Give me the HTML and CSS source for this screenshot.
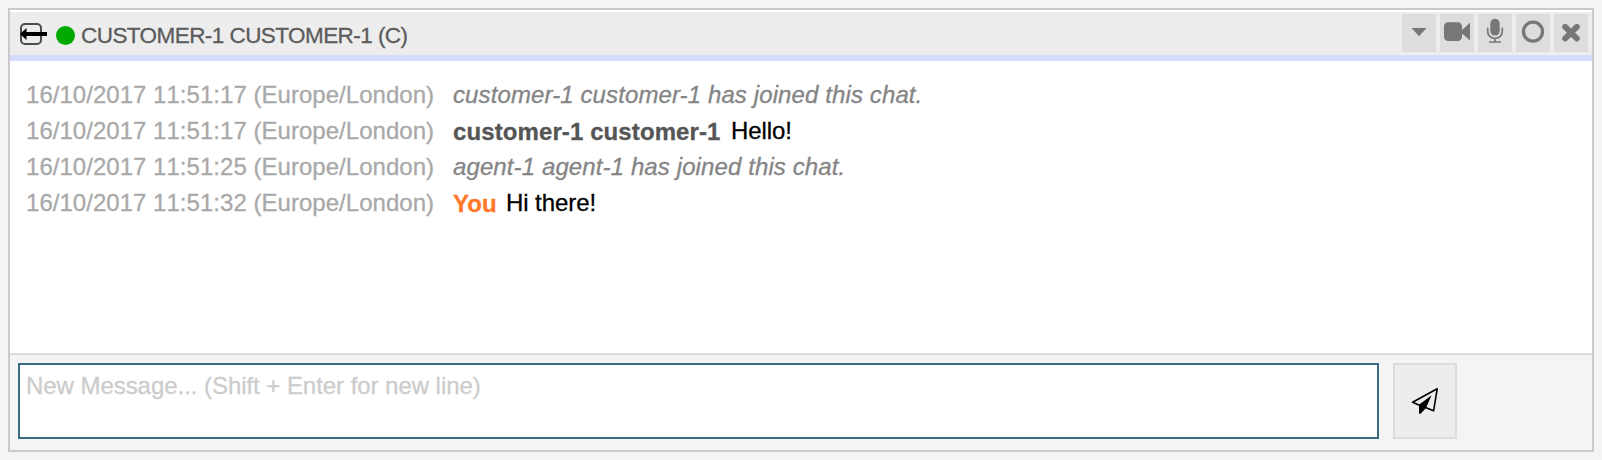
FILE: index.html
```html
<!DOCTYPE html>
<html lang="en">
<head>
<meta charset="utf-8">
<title>Chat</title>
<link rel="stylesheet" href="styles.css">
</head>
<body>
<section class="chat">
  <header class="chat-header">
    <svg class="exit-icon" width="30" height="24" viewBox="0 0 30 24"><rect x="2" y="2" width="20" height="20" rx="4" fill="none" stroke="#4c4c4c" stroke-width="2"/><path d="M1 12 7.5 6V10H28v4H7.5v4Z"/></svg>
    <span class="status"></span>
    <h1 class="title">CUSTOMER-1 CUSTOMER-1 (C)</h1>
    <div class="tools">
      <button class="tool" aria-label="Options"><svg viewBox="0 0 34 38"><path d="M9.6 14h15L17 22.3Z"/></svg></button>
      <button class="tool" aria-label="Video"><svg viewBox="0 0 34 38"><rect x="4" y="8.3" width="18" height="18.7" rx="4.2"/><path d="m22 16 8-7.2v17.8L22 19.4Z"/></svg></button>
      <button class="tool" aria-label="Audio"><svg viewBox="0 0 34 38"><rect x="12.3" y="4.8" width="9.4" height="16.8" rx="4.7"/><path d="M9.7 14.3v3.2a7.3 7 0 0 0 14.6 0v-3.2M17 24.5v3.4M11.8 28h10.5" fill="none" stroke="#777" stroke-width="1.7" stroke-linecap="round"/></svg></button>
      <button class="tool" aria-label="Record"><svg viewBox="0 0 34 38"><circle cx="17" cy="17.6" r="9.5" fill="none" stroke="#777" stroke-width="3.3"/></svg></button>
      <button class="tool" aria-label="Close"><svg viewBox="0 0 34 38"><path d="m11.2 12.9 11.6 11.6M22.8 12.9 11.2 24.5" fill="none" stroke="#777" stroke-width="6" stroke-linecap="round"/></svg></button>
    </div>
  </header>
  <div class="log">
    <div class="row"><time class="time">16/10/2017 11:51:17 (Europe/London)</time><em class="event">customer-1 customer-1 has joined this chat.</em></div>
    <div class="row"><time class="time">16/10/2017 11:51:17 (Europe/London)</time><b class="sender customer">customer-1 customer-1</b><span class="text">Hello!</span></div>
    <div class="row"><time class="time">16/10/2017 11:51:25 (Europe/London)</time><em class="event">agent-1 agent-1 has joined this chat.</em></div>
    <div class="row"><time class="time">16/10/2017 11:51:32 (Europe/London)</time><b class="sender you">You</b><span class="text">Hi there!</span></div>
  </div>
  <footer class="composer">
    <div class="message-input">New Message... (Shift + Enter for new line)</div>
    <button class="send" aria-label="Send"><svg width="60" height="72" viewBox="0 0 60 72"><path d="M24.5 40.2 17.6 37.2 42.2 23.8 38.6 45.8 30.5 42.6" fill="none" stroke="#000" stroke-width="1.6" stroke-linejoin="round"/><path d="M36.6 30.3 24 39.7v9h1.6l5.4-5.8Z"/></svg></button>
  </footer>
</section>
</body>
</html>
```
FILE: styles.css
```css
* { box-sizing: border-box; }
body {
  margin: 0;
  padding: 8px;
  height: 460px;
  background: #f4f4f4;
  font-family: "Liberation Sans", Arial, sans-serif;
  font-size: 24px;
  -webkit-text-stroke: 0.3px currentColor;
}
button { padding: 0; border: 0; }
svg { display: block; }
.chat {
  display: flex;
  flex-direction: column;
  height: 444px;
  border: 2px solid #cacaca;
  background: #fff;
}
.chat-header {
  display: flex;
  align-items: flex-start;
  height: 49px;
  margin-top: 2px;
  padding: 2px 4px 0 9px;
  border-bottom: 6px solid #d4dcfb;
  background: #ededed;
}
.exit-icon { margin-top: 8px; }
.status {
  width: 19px;
  height: 19px;
  margin: 12px 0 0 7px;
  border-radius: 50%;
  background: #00a900;
}
.title {
  margin: 7px 0 0 6px;
  color: #5c5c5c;
  font-size: 22.5px;
  font-weight: 400;
  line-height: 30px;
  letter-spacing: -0.56px;
}
.tools { display: flex; gap: 4px; margin-left: auto; }
.tool { width: 34px; height: 38px; background: #ddd; fill: #777; }
.log { flex: 1; padding: 16px 16px 0; }
.row { display: flex; height: 36px; line-height: 36px; white-space: nowrap; }
.time { width: 427px; color: #a9a9a9; font-kerning: none; letter-spacing: 0.03px; }
.event { color: #858585; letter-spacing: 0.11px; }
.sender { padding-top: 1px; letter-spacing: 0.1px; }
.customer { width: 278px; color: #555; }
.you { width: 53px; color: #ff7827; }
.text { color: #000; letter-spacing: -0.08px; }
.composer {
  display: flex;
  gap: 14px;
  height: 97px;
  padding: 8px;
  border-top: 2px solid #dcdcdc;
  background: #f4f4f4;
}
.message-input {
  width: 1361px;
  height: 76px;
  padding: 7px 6px;
  border: 2px solid #396c83;
  background: #fff;
  color: #ccc;
  line-height: 28px;
  letter-spacing: -0.05px;
}
.send { width: 64px; height: 76px; border: 2px solid #dcdcdc; background: #ededed; }
```
